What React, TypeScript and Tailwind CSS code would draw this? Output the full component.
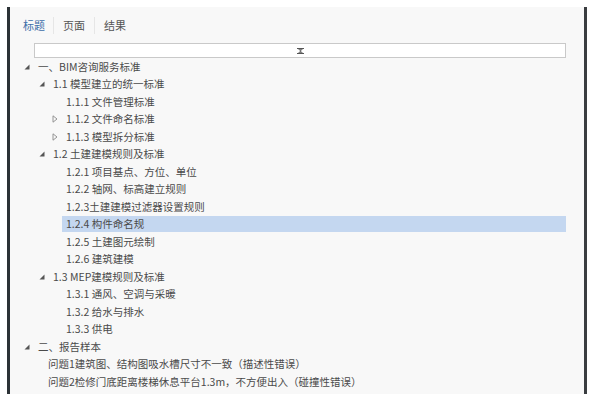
import React from "react";

type Row = { label: string; level: 0 | 1 | 2 | 3; state: "open" | "closed" | "leaf"; selected?: boolean };

const rows: Row[] = [
  { label: "一、BIM咨询服务标准", level: 0, state: "open" },
  { label: "1.1 模型建立的统一标准", level: 1, state: "open" },
  { label: "1.1.1 文件管理标准", level: 2, state: "leaf" },
  { label: "1.1.2 文件命名标准", level: 2, state: "closed" },
  { label: "1.1.3 模型拆分标准", level: 2, state: "closed" },
  { label: "1.2 土建建模规则及标准", level: 1, state: "open" },
  { label: "1.2.1 项目基点、方位、单位", level: 2, state: "leaf" },
  { label: "1.2.2 轴网、标高建立规则", level: 2, state: "leaf" },
  { label: "1.2.3土建建模过滤器设置规则", level: 2, state: "leaf" },
  { label: "1.2.4 构件命名规", level: 2, state: "leaf", selected: true },
  { label: "1.2.5 土建图元绘制", level: 2, state: "leaf" },
  { label: "1.2.6 建筑建模", level: 2, state: "leaf" },
  { label: "1.3 MEP建模规则及标准", level: 1, state: "open" },
  { label: "1.3.1 通风、空调与采暖", level: 2, state: "leaf" },
  { label: "1.3.2 给水与排水", level: 2, state: "leaf" },
  { label: "1.3.3 供电", level: 2, state: "leaf" },
  { label: "二、报告样本", level: 0, state: "open" },
  { label: "问题1建筑图、结构图吸水槽尺寸不一致（描述性错误）", level: 3, state: "leaf" },
  { label: "问题2检修门底距离楼梯休息平台1.3m，不方便出入（碰撞性错误）", level: 3, state: "leaf" },
];

const padClass: Record<number, string> = {
  0: "pl-[10px]",
  1: "pl-[25px]",
  2: "pl-[38px]",
  3: "pl-[34px]",
};

function Expander({ state }: { state: Row["state"] }) {
  if (state === "open") {
    return (
      <svg width="6" height="6" viewBox="0 0 6 6">
        <polygon points="5.5,0.5 5.5,5.5 0.5,5.5" fill="#555" />
      </svg>
    );
  }
  if (state === "closed") {
    return (
      <svg width="6" height="8" viewBox="0 0 6 8">
        <polygon points="1,0.8 5,4 1,7.2" fill="none" stroke="#8a8a8a" strokeWidth="0.9" />
      </svg>
    );
  }
  return null;
}

export default function App() {
  return (
    <div className="w-[597px] h-[399px] bg-white overflow-hidden" style={{ fontFamily: '"Noto Sans CJK SC", "Noto Sans", sans-serif' }}>
      <div className="ml-[7px] mt-[7px] w-[580px] h-[387px] border-l-[3px] border-r-[3px] border-l-[#2c3236] border-r-[#3a3d40] bg-[#f8f8f8] flex flex-col">
        <div className="mt-[9px] h-[18px] flex items-center text-[11px] leading-[18px]">
          <span className="pl-[13px] pr-[8px] text-[#3d6ea8]">标题</span>
          <span className="w-px h-[17px] bg-[#e6e6e6]" />
          <span className="px-[9px] text-[#555]">页面</span>
          <span className="w-px h-[17px] bg-[#e6e6e6]" />
          <span className="px-[9px] text-[#555]">结果</span>
        </div>
        <div className="mt-[9px] ml-[24px] mr-[18px] h-[15px] border border-[#c9c9c9] bg-white flex items-center justify-center">
          <svg width="7" height="6" viewBox="0 0 7 6">
            <line x1="0" y1="0.5" x2="7" y2="0.5" stroke="#555" strokeWidth="1" />
            <polygon points="1,1.3 6,1.3 3.5,3" fill="#555" />
            <polygon points="1,4.7 6,4.7 3.5,3" fill="#555" />
            <line x1="0" y1="5.5" x2="7" y2="5.5" stroke="#555" strokeWidth="1" />
          </svg>
        </div>
        <div className="flex flex-col">
          {rows.map((r, i) => (
            <div key={i} className={`h-[17.5px] flex items-center ${padClass[r.level]}`}>
              {r.level !== 3 && (
                <span className="w-[14px] flex items-center justify-center">
                  <Expander state={r.state} />
                </span>
              )}
              <span
                className={`flex-1 mr-[18px] h-[16px] px-[4px] text-[10.5px] leading-[16px] text-[#4a4a4a] whitespace-nowrap ${
                  r.selected ? "bg-[#c4d7f0]" : ""
                }`}
              >
                {r.label}
              </span>
            </div>
          ))}
        </div>
      </div>
    </div>
  );
}
